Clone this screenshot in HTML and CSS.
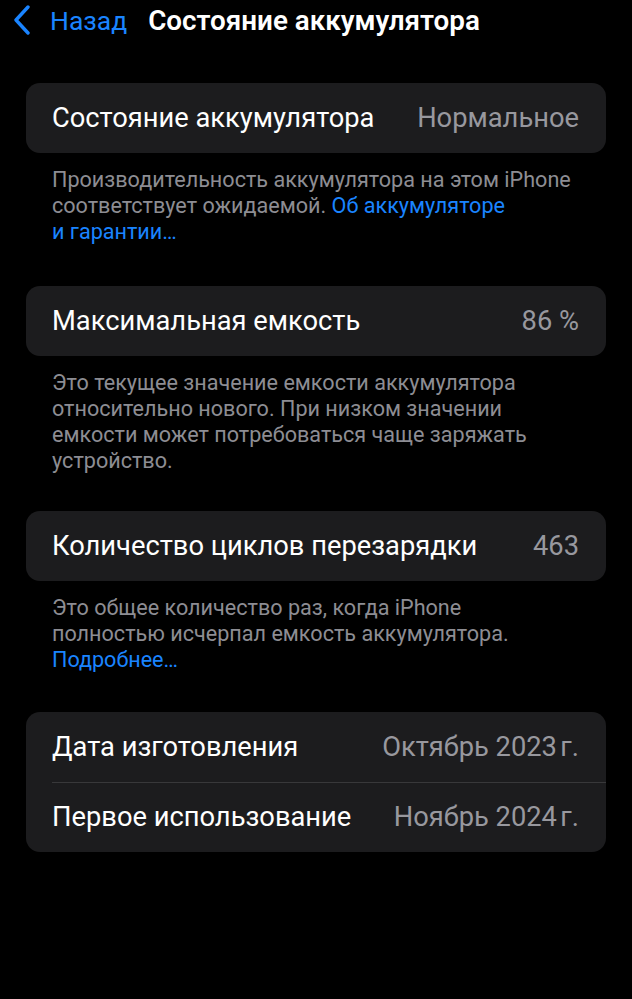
FILE: index.html
```html
<!DOCTYPE html>
<html lang="ru">
<head>
<meta charset="utf-8">
<link rel="stylesheet" href="styles.css">
</head>
<body>
<div class="nav">
  <svg class="chev" width="18" height="30" viewBox="0 0 18 30"><path d="M15 2 L3 15 L15 28" fill="none" stroke="#1a84ff" stroke-width="3.4" stroke-linecap="round" stroke-linejoin="round"/></svg>
  <span class="back">Назад</span>
  <span class="title">Состояние аккумулятора</span>
</div>
<div class="content">
  <div class="card">
    <div class="row"><span class="label">Состояние аккумулятора</span><span class="value">Нормальное</span></div>
  </div>
  <p class="note note-first">Производительность аккумулятора на этом iPhone<br>соответствует ожидаемой. <span class="link">Об аккумуляторе</span><br><span class="link">и гарантии…</span></p>

  <div class="card">
    <div class="row"><span class="label">Максимальная емкость</span><span class="value">86 %</span></div>
  </div>
  <p class="note note-second">Это текущее значение емкости аккумулятора<br>относительно нового. При низком значении<br>емкости может потребоваться чаще заряжать<br>устройство.</p>

  <div class="card">
    <div class="row"><span class="label">Количество циклов перезарядки</span><span class="value">463</span></div>
  </div>
  <p class="note">Это общее количество раз, когда iPhone<br>полностью исчерпал емкость аккумулятора.<br><span class="link">Подробнее…</span></p>

  <div class="card">
    <div class="row"><span class="label">Дата изготовления</span><span class="value">Октябрь 2023&#8239;г.</span></div>
    <div class="row sep"><span class="label">Первое использование</span><span class="value">Ноябрь 2024&#8239;г.</span></div>
  </div>
</div>
</body>
</html>
```

FILE: styles.css
```css
html, body {
  margin: 0;
  padding: 0;
  background: #000;
}
body {
  font-family: Roboto, "Noto Sans", "Liberation Sans", sans-serif;
  color: #fff;
  width: 632px;
  height: 999px;
  overflow: hidden;
}
.nav {
  height: 40px;
  display: flex;
  align-items: center;
  padding-left: 13px;
}
.chev {
  display: block;
  margin-right: 19px;
  margin-top: -1px;
}
.back {
  color: #1a84ff;
  font-size: 26.5px;
  margin-right: 21px;
}
.title {
  font-size: 27.8px;
  font-weight: 600;
}
.content {
  padding: 43px 26px 0 26px;
}
.card {
  background: #1c1c1e;
  border-radius: 14px;
  overflow: hidden;
}
.row {
  height: 70px;
  display: flex;
  align-items: center;
  justify-content: space-between;
  padding: 0 27px 0 26px;
  font-size: 27.3px;
  position: relative;
}
.row.sep::before {
  content: "";
  position: absolute;
  left: 26px;
  right: 0;
  top: 0;
  height: 1px;
  background: #38383a;
}
.value {
  color: #98989e;
}
.note {
  margin: 14px 0 39px 0;
  padding: 0 26px;
  font-size: 21.6px;
  line-height: 26px;
  color: #8d8d93;
  white-space: nowrap;
}
.note-first {
  margin-bottom: 41px;
}
.note-second {
  margin-bottom: 37px;
}
.link {
  color: #1a84ff;
}
```
